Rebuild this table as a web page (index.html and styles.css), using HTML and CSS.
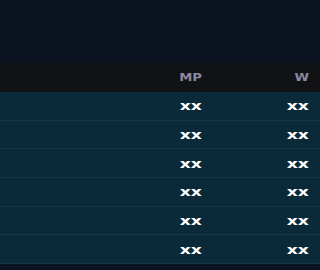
FILE: index.html
```html
<!DOCTYPE html>
<html>
<head>
<meta charset="utf-8">
<link rel="stylesheet" href="styles.css">
</head>
<body>
<div class="page">
  <div class="top"></div>
  <div class="table">
    <div class="row head">
      <div class="cell"></div>
      <div class="cell"><span class="txt">MP</span></div>
      <div class="cell"><span class="txt">W</span></div>
    </div>
    <div class="row"><div class="cell"></div><div class="cell"><span class="txt">xx</span></div><div class="cell"><span class="txt">xx</span></div></div>
    <div class="row"><div class="cell"></div><div class="cell"><span class="txt">xx</span></div><div class="cell"><span class="txt">xx</span></div></div>
    <div class="row"><div class="cell"></div><div class="cell"><span class="txt">xx</span></div><div class="cell"><span class="txt">xx</span></div></div>
    <div class="row"><div class="cell"></div><div class="cell"><span class="txt">xx</span></div><div class="cell"><span class="txt">xx</span></div></div>
    <div class="row"><div class="cell"></div><div class="cell"><span class="txt">xx</span></div><div class="cell"><span class="txt">xx</span></div></div>
    <div class="row"><div class="cell"></div><div class="cell"><span class="txt">xx</span></div><div class="cell"><span class="txt">xx</span></div></div>
  </div>
</div>
</body>
</html>
```
FILE: styles.css
```css
html, body {
  margin: 0;
  padding: 0;
  background: #0b1220;
  width: 320px;
  height: 270px;
  overflow: hidden;
  font-family: "DejaVu Sans", sans-serif;
}
.top {
  height: 63px;
  background: #0b1220;
}
.table {
  display: flex;
  flex-direction: column;
}
.row {
  display: grid;
  grid-template-columns: 1fr 107px 107px;
  height: 28.67px;
  box-sizing: border-box;
  background: #0a2a3a;
  border-bottom: 1px solid #123849;
  align-items: center;
  color: #ffffff;
  font-weight: bold;
  font-size: 13px;
}
.row.head {
  height: 29px;
  background: #111214;
  border-bottom: none;
  color: #8a88a2;
  font-size: 11px;
}
.cell {
  text-align: right;
  padding-right: 11px;
  line-height: 1;
}
.txt {
  display: inline-block;
  transform: scaleX(1.32);
  transform-origin: right center;
}
.head .txt {
  transform: scaleX(1.2);
}
```
